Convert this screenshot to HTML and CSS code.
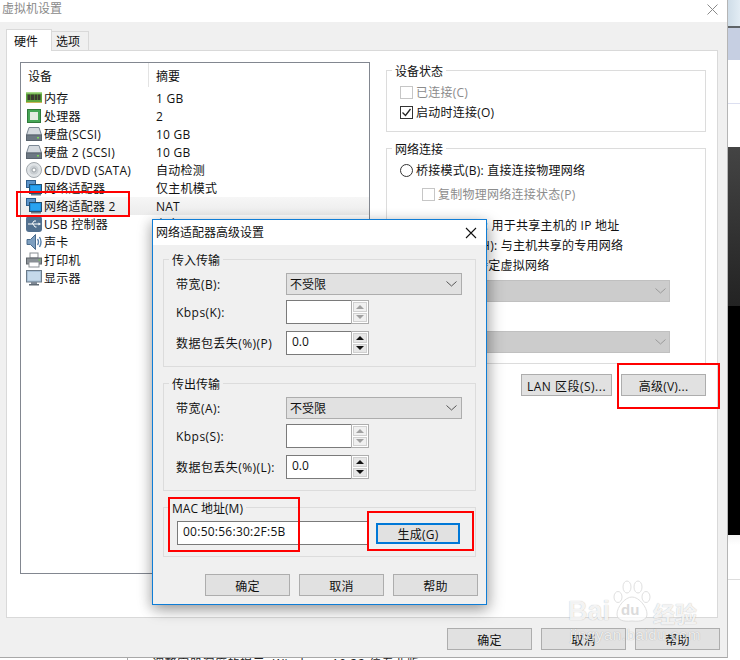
FILE: index.html
```html
<!DOCTYPE html>
<html lang="zh-CN">
<head>
<meta charset="utf-8">
<title>虚拟机设置</title>
<link rel="stylesheet" href="styles.css">
</head>
<body>
<div class="desktop">
  <div class="top-area">
    <main class="window">
      <header class="titlebar">
        <span class="window-title">虚拟机设置</span>
        <svg class="close-main" width="11" height="11" viewBox="0 0 11 11"><path d="M0.5 0.5L10.5 10.5M10.5 0.5L0.5 10.5" stroke="#8a8a8a" fill="none"/></svg>
      </header>
      <div class="window-body">
        <div class="tabs">
          <span class="tab tab-active">硬件</span>
          <span class="tab">选项</span>
        </div>
        <div class="panel">
          <section class="device-list">
            <div class="list-head"><span class="head-name">设备</span><span class="head-sum">摘要</span></div>
            <div class="row"><span class="name"><svg class="ico" viewBox="0 0 16 16"><rect x="0" y="2" width="16" height="10" fill="#5fa83c"/><rect x="0" y="2" width="16" height="1.500" fill="#a5d888"/><rect x="1.500" y="4.500" width="3" height="5.500" fill="#3a3a30"/><rect x="5" y="4.500" width="3" height="5.500" fill="#3a3a30"/><rect x="8.500" y="4.500" width="3" height="5.500" fill="#3a3a30"/><rect x="12" y="4.500" width="2.500" height="5.500" fill="#3a3a30"/><rect x="0" y="12" width="16" height="1" fill="#c9b458"/></svg>内存</span><span class="sum">1 GB</span></div>
            <div class="row"><span class="name"><svg class="ico" viewBox="0 0 16 16"><rect x="1.500" y="1.500" width="13" height="13" fill="#46a556"/><rect x="4" y="4" width="8" height="8" fill="#e4ebe2"/><rect x="1.500" y="1.500" width="13" height="13" fill="none" stroke="#2f7a3a"/></svg>处理器</span><span class="sum">2</span></div>
            <div class="row"><span class="name"><svg class="ico" viewBox="0 0 16 16"><path d="M3 1.500H13L15.500 9H0.500Z" fill="#d5dadf" stroke="#7c8894"/><rect x="0.500" y="9" width="15" height="5.500" fill="#6d7883" stroke="#59636d"/><rect x="11" y="11" width="2" height="1.500" fill="#7ed957"/></svg>硬盘(SCSI)</span><span class="sum">10 GB</span></div>
            <div class="row"><span class="name"><svg class="ico" viewBox="0 0 16 16"><path d="M3 1.500H13L15.500 9H0.500Z" fill="#d5dadf" stroke="#7c8894"/><rect x="0.500" y="9" width="15" height="5.500" fill="#6d7883" stroke="#59636d"/><rect x="11" y="11" width="2" height="1.500" fill="#7ed957"/></svg>硬盘 2 (SCSI)</span><span class="sum">10 GB</span></div>
            <div class="row"><span class="name"><svg class="ico" viewBox="0 0 16 16"><circle cx="8" cy="8" r="7.500" fill="#dfe3e6" stroke="#a3a9ae"/><circle cx="8" cy="8" r="4.500" fill="#c9ced2"/><circle cx="8" cy="8" r="2" fill="#fff" stroke="#9aa0a5"/></svg>CD/DVD (SATA)</span><span class="sum">自动检测</span></div>
            <div class="row"><span class="name"><svg class="ico" viewBox="0 0 16 16"><rect x="0.500" y="0.500" width="9" height="7" fill="#5b93c9" stroke="#2d5f8f"/><rect x="3.500" y="4.500" width="12" height="9" fill="#1e8fe0" stroke="#24506f"/><rect x="5" y="6" width="9" height="6" fill="#2aa3f0"/><rect x="5" y="14" width="10" height="1.500" fill="#6c7a86"/></svg>网络适配器</span><span class="sum">仅主机模式</span></div>
            <div class="row row-selected"><span class="name"><svg class="ico" viewBox="0 0 16 16"><rect x="0.500" y="0.500" width="9" height="7" fill="#5b93c9" stroke="#2d5f8f"/><rect x="3.500" y="4.500" width="12" height="9" fill="#1e8fe0" stroke="#24506f"/><rect x="5" y="6" width="9" height="6" fill="#2aa3f0"/><rect x="5" y="14" width="10" height="1.500" fill="#6c7a86"/></svg>网络适配器 2</span><span class="sum">NAT</span></div>
            <div class="row"><span class="name"><svg class="ico" viewBox="0 0 16 16"><rect x="0" y="0" width="16" height="16" rx="3" fill="#52708f"/><path d="M2 8H13M6 8L8 5H10M7 8L9 11H10.500" stroke="#fff" fill="none"/><path d="M12.500 6.500L15 8L12.500 9.500Z" fill="#fff"/></svg>USB 控制器</span><span class="sum">存在</span></div>
            <div class="row"><span class="name"><svg class="ico" viewBox="0 0 16 16"><path d="M1 5.500H4.500L9.500 0.500V15.500L4.500 10.500H1Z" fill="#7d9fc0" stroke="#4a6b8c"/><path d="M11.500 5Q13.500 8 11.500 11M13.500 3Q16.500 8 13.500 13" stroke="#5a83ad" stroke-width="1.400" fill="none"/></svg>声卡</span><span class="sum">自动检测</span></div>
            <div class="row"><span class="name"><svg class="ico" viewBox="0 0 16 16"><rect x="4" y="1" width="8" height="5" fill="#fff" stroke="#8a8f94"/><rect x="0.500" y="6" width="15" height="6" fill="#8b9197" stroke="#5e646a"/><rect x="3" y="10" width="10" height="5" fill="#fff" stroke="#8a8f94"/><rect x="12.500" y="7.500" width="2" height="1" fill="#6fd04a"/></svg>打印机</span><span class="sum">存在</span></div>
            <div class="row"><span class="name"><svg class="ico" viewBox="0 0 16 16"><rect x="0.500" y="0.500" width="15" height="11.500" fill="#a8c0d6" stroke="#6b7b8a"/><rect x="2" y="2" width="12" height="8.500" fill="#c5d9ea"/><rect x="5" y="12" width="6" height="2" fill="#7d8894"/><rect x="3" y="14" width="10" height="1.500" fill="#5f6a75"/></svg>显示器</span><span class="sum">自动检测</span></div>
          </section>
          <section class="settings">
            <div class="group group-status">
              <div class="group-title">设备状态</div>
              <label class="opt opt-first opt-disabled"><span class="box box-disabled"></span>已连接(C)</label>
              <label class="opt"><span class="box"><svg width="11" height="11" viewBox="0 0 11 11"><path d="M1.500 5.500L4.500 8.500L9.500 2" stroke="#222" stroke-width="1.300" fill="none"/></svg></span>启动时连接(O)</label>
            </div>
            <div class="group group-net">
              <div class="group-title">网络连接</div>
              <label class="opt opt-first"><span class="radio"></span>桥接模式(B): 直接连接物理网络</label>
              <label class="opt opt-sub opt-disabled"><span class="box box-disabled"></span>复制物理网络连接状态(P)</label>
              <label class="opt opt-gap"><span class="radio"></span>NAT 模式(N): 用于共享主机的 IP 地址</label>
              <label class="opt"><span class="radio"></span>仅主机模式(H): 与主机共享的专用网络</label>
              <label class="opt"><span class="radio"></span>自定义(U): 特定虚拟网络</label>
              <div class="net-select net-select-first"><svg class="chev" width="11" height="6" viewBox="0 0 11 6"><path d="M0.500 0.500L5.500 5L10.500 0.500" stroke="#9a9a9a" fill="none"/></svg></div>
              <div class="net-select net-select-second"><svg class="chev" width="11" height="6" viewBox="0 0 11 6"><path d="M0.500 0.500L5.500 5L10.500 0.500" stroke="#9a9a9a" fill="none"/></svg></div>
            </div>
            <div class="net-actions">
              <button class="btn btn-lan">LAN 区段(S)...</button>
              <button class="btn btn-adv">高级(V)...</button>
            </div>
          </section>
        </div>
        <footer class="window-foot">
          <button class="btn">确定</button>
          <button class="btn">取消</button>
          <button class="btn">帮助</button>
        </footer>
      </div>
    </main>
    <aside class="backdrop">
      <div class="bd-sky"></div>
      <div class="bd-line"></div>
      <div class="bd-blue"></div>
      <div class="bd-white"></div>
      <div class="bd-dark"></div>
      <div class="bd-black"></div>
      <div class="bd-page"></div>
    </aside>
  </div>
  <div class="bottom-strip"><span class="strip-rule"></span><span class="strip-text">调整容器深度的提示: Windows 10 32 位专业版</span></div>

  <section class="dialog">
    <header class="dialog-title">
      <span>网络适配器高级设置</span>
      <svg width="12" height="12" viewBox="0 0 12 12"><path d="M1 1L11 11M11 1L1 11" stroke="#111" stroke-width="1.100" fill="none"/></svg>
    </header>
    <div class="dialog-body">
      <div class="group dlg-group">
        <div class="group-title">传入传输</div>
        <div class="field field-first"><span class="lbl">带宽(B):</span><div class="combo"><span class="combo-text">不受限</span><svg width="11" height="6" viewBox="0 0 11 6"><path d="M0.500 0.500L5.500 5L10.500 0.500" stroke="#555" fill="none"/></svg></div></div>
        <div class="field field-spin1"><span class="lbl">Kbps(K):</span><div class="spin spin-off"><span class="spin-val"></span><span class="spin-btns"><i class="up"></i><i class="down"></i></span></div></div>
        <div class="field field-spin2"><span class="lbl">数据包丢失(%)(P)</span><div class="spin"><span class="spin-val">0.0</span><span class="spin-btns"><i class="up"></i><i class="down"></i></span></div></div>
      </div>
      <div class="group dlg-group">
        <div class="group-title">传出传输</div>
        <div class="field field-first"><span class="lbl">带宽(A):</span><div class="combo"><span class="combo-text">不受限</span><svg width="11" height="6" viewBox="0 0 11 6"><path d="M0.500 0.500L5.500 5L10.500 0.500" stroke="#555" fill="none"/></svg></div></div>
        <div class="field field-spin1"><span class="lbl">Kbps(S):</span><div class="spin spin-off"><span class="spin-val"></span><span class="spin-btns"><i class="up"></i><i class="down"></i></span></div></div>
        <div class="field field-spin2"><span class="lbl">数据包丢失(%)(L):</span><div class="spin"><span class="spin-val">0.0</span><span class="spin-btns"><i class="up"></i><i class="down"></i></span></div></div>
      </div>
      <div class="group mac-group">
        <div class="group-title">MAC 地址(M)</div>
        <div class="mac-row">
          <div class="mac-input">00:50:56:30:2F:5B</div>
          <button class="btn btn-gen">生成(G)</button>
        </div>
      </div>
      <div class="dialog-foot">
        <button class="btn">确定</button>
        <button class="btn">取消</button>
        <button class="btn">帮助</button>
      </div>
    </div>
  </section>

  <div class="mark mark-list"></div>
  <div class="mark mark-adv"></div>
  <div class="mark mark-mac"></div>
  <div class="mark mark-gen"></div>

  <div class="watermark">
    <div class="wm-logo">
      <span class="wm-bai">Bai</span>
      <span class="wm-paw">
        <svg width="40" height="44" viewBox="0 0 40 44"><g fill="none" stroke="#d6d6d6" stroke-width="1"><ellipse cx="6" cy="17" rx="4" ry="5.500" fill="#fff"/><ellipse cx="15" cy="7" rx="4" ry="6" fill="#fff"/><ellipse cx="26" cy="7" rx="4" ry="6" fill="#fff"/><ellipse cx="34" cy="17" rx="4" ry="5.500" fill="#fff"/><path d="M20 17C13 17 5 27 5 34C5 40 11 42 20 41C29 42 35 40 35 34C35 27 27 17 20 17Z" fill="#fff"/></g></svg>
        <span class="wm-du">du</span>
      </span>
      <span class="wm-cn">经验</span>
    </div>
    <div class="wm-url">jingyan.baidu.com</div>
  </div>
</div>
</body>
</html>
```
FILE: styles.css
```css
* { box-sizing: border-box; }
html, body { margin: 0; padding: 0; background: #fff; }
body {
  font-family: "Open Sans", "Noto Sans CJK SC", sans-serif;
  font-size: 12px;
  line-height: 16px;
  color: #111;
}
.desktop { position: relative; width: 740px; height: 660px; overflow: hidden; }
.top-area { display: flex; height: 658px; }

.window {
  width: 728px;
  flex: none;
  display: flex;
  flex-direction: column;
  background: #f0f0f0;
  border-right: 1px solid #b5b5b5;
  border-bottom: 1px solid #a8a8a8;
}
.titlebar {
  height: 22px;
  flex: none;
  background: #fff;
  display: flex;
  align-items: center;
  justify-content: space-between;
  padding: 0 9px 4px 2px;
}
.window-title { color: #8a8a8a; }
.window-body { flex: 1; display: flex; flex-direction: column; padding: 7px 0 0 6px; }
.tabs { display: flex; height: 21px; align-items: flex-end; }
.tab {
  height: 19px;
  width: 38px;
  border: 1px solid #d9d9d9;
  border-bottom: none;
  padding-left: 4px;
  line-height: 20px;
  margin-left: -1px;
  background: #f0f0f0;
}
.tab-active {
  height: 22px;
  width: 46px;
  background: #fff;
  margin-left: 0;
  padding-left: 7px;
  position: relative;
  z-index: 1;
  margin-bottom: -1px;
  line-height: 23px;
}
.panel {
  width: 712px;
  height: 568px;
  background: #fff;
  border: 1px solid #d9d9d9;
  display: flex;
  padding: 11px 0 0 13px;
  gap: 16px;
}

.device-list {
  width: 350px;
  height: 512px;
  flex: none;
  border: 1px solid #828790;
  background: #fff;
}
.list-head { display: flex; height: 26px; align-items: flex-start; }
.head-name { width: 128px; padding-left: 7px; border-right: 1px solid #e3e3e3; height: 24px; line-height: 27px; }
.head-sum { padding-left: 7px; line-height: 27px; height: 24px; }
.row { display: flex; height: 18px; align-items: center; padding-top: 1px; letter-spacing: 0.25px; }
.row-selected { background: linear-gradient(#f6f6f6, #ececec); }
.name { width: 135px; padding-left: 5px; display: flex; align-items: center; gap: 2px; flex: none; white-space: nowrap; }
.ico { width: 16px; height: 16px; flex: none; margin-top: -1px; }
.sum { white-space: nowrap; }

.settings { width: 320px; flex: none; padding-top: 8px; }
.group { border: 1px solid #dcdcdc; display: flex; flex-direction: column; }
.group-title {
  height: 16px;
  margin: -7px 0 0 -8px;
  padding: 0 3px;
  width: fit-content;
  background: #fff;
}
.group-status { height: 62px; padding-left: 13px; }
.group-net { height: 216px; margin-top: 16px; padding-left: 13px; }
.opt { display: flex; align-items: center; gap: 3px; height: 20px; padding-top: 2px; white-space: nowrap; letter-spacing: 0.25px; }
.opt-first { margin-top: 2px; }
.opt-disabled { color: #8c8c8c; }
.opt-sub { margin: 4px 0 0 22px; }
.opt-gap { margin-top: 11px; }
.box {
  width: 13px;
  height: 13px;
  flex: none;
  border: 1px solid #333;
  display: flex;
  align-items: center;
  justify-content: center;
  background: #fff;
  margin-top: -2px;
}
.box-disabled { border-color: #c6c6c6; }
.radio { width: 13px; height: 13px; flex: none; border: 1px solid #333; border-radius: 50%; background: #fff; margin-top: -2px; }
.net-select {
  width: 254px;
  height: 22px;
  margin-left: 16px;
  background: #cccccc;
  border: 1px solid #c0c0c0;
  display: flex;
  align-items: center;
  justify-content: flex-end;
  padding-right: 3px;
}
.net-select-first { margin-top: 5px; }
.net-select-second { margin-top: 29px; }
.net-actions { display: flex; justify-content: flex-end; gap: 9px; margin-top: 10px; }

.btn {
  width: 85px;
  height: 22px;
  padding: 3px 0 0;
  background: #e1e1e1;
  border: 1px solid #adadad;
  font: inherit;
  letter-spacing: 0.25px;
  color: #111;
  white-space: nowrap;
}
.btn-lan { width: 91px; letter-spacing: 0.5px; }
.window-foot { display: flex; justify-content: flex-end; gap: 9px; margin-top: 10px; padding-right: 7px; }

.backdrop { flex: 1; display: flex; flex-direction: column; height: 660px; }
.bd-sky { height: 26px; background: linear-gradient(90deg, #cfdde8, #e2ecf4); }
.bd-line { height: 2px; background: #5f6468; }
.bd-blue { height: 32px; background: #c6cfe2; }
.bd-white { height: 87px; background: linear-gradient(#fff 49%, #dcdff0 49%, #dcdff0 50%, #fff 50%); }
.bd-dark { height: 159px; background: linear-gradient(#444, #232323); }
.bd-black { height: 229px; background: #000; }
.bd-page { flex: 1; background: linear-gradient(#f4f4f4 0, #fff 10px, #fff 35%, #ddd 35%, #ddd 36%, #fff 36%); }

.bottom-strip { height: 2px; overflow: hidden; background: #fff; padding-left: 127px; display: flex; }
.strip-rule { width: 1px; flex: none; background: #aaa; }
.strip-text { display: block; font-size: 12px; line-height: 14px; letter-spacing: 0.6px; color: #222; white-space: nowrap; margin: -1px 0 0 24px; }

.dialog {
  position: absolute;
  left: 152px;
  top: 219px;
  width: 335px;
  height: 386px;
  border: 1px solid #0f7dd6;
  background: #f0f0f0;
  box-shadow: 3px 5px 14px rgba(0, 0, 0, .28), -3px 3px 12px rgba(0, 0, 0, .18);
  display: flex;
  flex-direction: column;
}
.dialog-title {
  height: 25px;
  flex: none;
  background: #fff;
  display: flex;
  align-items: center;
  justify-content: space-between;
  padding: 0 9px 0 3px;
}
.dialog-body { padding: 14px 0 0 10px; flex: 1; display: flex; flex-direction: column; }
.dialog .group-title { background: #f0f0f0; margin-left: -7px; }
.dialog .mac-group .group-title { margin-left: -8px; }
.dlg-group { width: 313px; height: 108px; margin-bottom: 16px; padding-left: 12px; }
.field { display: flex; align-items: center; white-space: nowrap; }
.field-first { margin-top: 4px; height: 22px; }
.field-spin1 { margin-top: 5px; height: 24px; }
.field-spin2 { margin-top: 7px; height: 24px; }
.lbl { width: 110px; flex: none; padding-top: 2px; letter-spacing: 0.45px; }
.combo {
  width: 176px;
  height: 22px;
  background: #e1e1e1;
  border: 1px solid #adadad;
  display: flex;
  align-items: center;
  justify-content: space-between;
  padding: 0 4px 0 3px;
}
.combo-text { padding-top: 2px; }
.spin {
  width: 83px;
  height: 24px;
  display: flex;
  background: #fff;
}
.spin-val {
  flex: 1;
  border: 1px solid #7a7a7a;
  border-right: none;
  padding: 2px 0 0 5px;
  background: #fff;
  line-height: 16px;
}
.spin-btns {
  width: 18px;
  flex: none;
  border: 1px solid #adadad;
  display: flex;
  flex-direction: column;
  gap: 1px;
  padding: 1px;
  background: #fff;
}
.spin-btns i {
  flex: 1;
  background: #e6e6e6;
  border: 1px solid #d0d0d0;
  display: flex;
  align-items: center;
  justify-content: center;
}
.spin-btns i::after {
  content: "";
  width: 0;
  height: 0;
  border-left: 4px solid transparent;
  border-right: 4px solid transparent;
}
.up::after { border-bottom: 4px solid #111; }
.down::after { border-top: 4px solid #111; }
.spin-off .spin-btns i { background: #f0f0f0; }
.spin-off .up::after { border-bottom-color: #a0a0a0; }
.spin-off .down::after { border-top-color: #a0a0a0; }

.mac-group { width: 313px; height: 50px; padding-left: 13px; }
.mac-row { display: flex; margin-top: 4px; align-items: center; }
.mac-input {
  width: 192px;
  height: 24px;
  flex: none;
  background: #fff;
  border: 1px solid #7a7a7a;
  padding: 2px 0 0 5px;
  letter-spacing: 0.25px;
}
.btn-gen { width: 84px; height: 21px; border: 2px solid #0078d7; margin-left: 7px; padding-top: 2px; }
.dialog-foot { display: flex; justify-content: flex-end; gap: 9px; margin-top: 17px; padding-right: 8px; }

.mark { position: absolute; border: 2px solid #f00; }
.mark-list { left: 16px; top: 191px; width: 114px; height: 26px; }
.mark-adv { left: 617px; top: 363px; width: 103px; height: 46px; }
.mark-mac { left: 168px; top: 497px; width: 132px; height: 55px; }
.mark-gen { left: 367px; top: 511px; width: 107px; height: 40px; }

.watermark { position: absolute; left: 568px; top: 580px; width: 140px; color: #fff; }
.wm-logo { display: flex; align-items: flex-end; height: 44px; }
.wm-bai {
  font: bold 27px/26px "Liberation Sans", sans-serif;
  color: rgba(255, 255, 255, .85);
  text-shadow: 0 0 1px rgba(0, 0, 0, .3);
  width: 44px;
}
.wm-paw { position: relative; width: 40px; height: 44px; flex: none; opacity: .75; }
.wm-du {
  position: absolute;
  left: 9px;
  top: 22px;
  font: bold 15px/16px "Liberation Sans", sans-serif;
  color: #d0d0d0;
}
.wm-cn {
  font: bold 22px/24px "Noto Sans CJK SC", sans-serif;
  color: rgba(255, 255, 255, .85);
  text-shadow: 0 0 1px rgba(0, 0, 0, .3);
  margin-left: 1px;
  white-space: nowrap;
}
.wm-url {
  font: 15px/16px "Liberation Sans", sans-serif;
  letter-spacing: 0.6px;
  margin: 3px 0 0 2px;
  color: rgba(255, 255, 255, .8);
  text-shadow: 0 0 1px rgba(0, 0, 0, .3);
  white-space: nowrap;
}
```
